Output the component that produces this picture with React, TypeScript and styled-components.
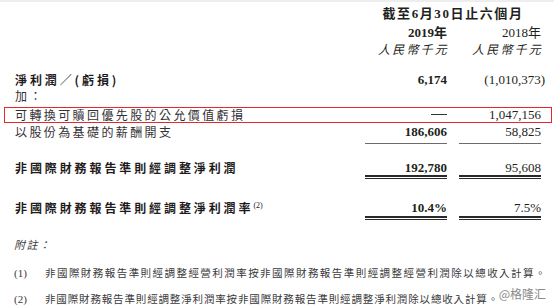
import React from "react";
import styled, { createGlobalStyle, css } from "styled-components";

const GlobalStyle = createGlobalStyle`
  html, body {
    margin: 0;
    padding: 0;
    background: #ffffff;
  }
  body {
    font-family: "Liberation Serif", "Noto Sans CJK TC", serif;
    color: #231f20;
  }
`;

const Page = styled.div`
  position: relative;
  width: 554px;
  height: 308px;
  box-sizing: border-box;
  border-top: 2px solid #eeeeee;
  overflow: hidden;
  display: flex;
  flex-direction: column;
`;

const Grid = styled.div<{ $mt?: number }>`
  display: grid;
  grid-template-columns: 1fr 82px 82px;
  column-gap: 12px;
  padding: 0 13px 0 15px;
  margin-top: ${(p) => p.$mt ?? 0}px;
  align-items: start;
`;

const HeadRow = styled(Grid)<{ $h: number }>`
  height: ${(p) => p.$h}px;
  align-items: center;
`;

const Period = styled.div`
  grid-column: 2 / 4;
  text-align: center;
  font-size: 13px;
  font-weight: 700;
  letter-spacing: 1.6px;
  line-height: 16px;
`;

const Year = styled.div<{ $bold?: boolean }>`
  grid-column: ${(p) => (p.$bold ? 2 : 3)};
  text-align: right;
  font-size: 13px;
  font-weight: ${(p) => (p.$bold ? 700 : 400)};
  line-height: 16px;
`;

const Currency = styled.div<{ $col: number }>`
  grid-column: ${(p) => p.$col};
  text-align: right;
  font-family: "Noto Sans CJK TC", sans-serif;
  font-style: italic;
  font-size: 12px;
  letter-spacing: 2.2px;
  margin-right: -2px;
  line-height: 15px;
`;

const Row = styled(Grid)<{ $lh?: number }>`
  line-height: ${(p) => p.$lh ?? 16}px;
`;

const Boxed = styled(Row)`
  box-sizing: border-box;
  height: 16px;
  margin-left: 4px;
  margin-right: 2px;
  padding: 0 10px 0 10px;
  border: 1px solid #e8262b;
  line-height: 14px;
`;

const Label = styled.div<{ $bold?: boolean }>`
  font-family: "Noto Sans CJK TC", sans-serif;
  font-size: 12px;
  font-weight: ${(p) => (p.$bold ? 700 : 400)};
  letter-spacing: ${(p) => (p.$bold ? 2.9 : 2.4)}px;
  white-space: nowrap;
  color: ${(p) => (p.$bold ? "#1f1b1c" : "#333033")};
`;

const Sup = styled.sup`
  font-family: "Liberation Serif", serif;
  font-weight: 400;
  font-size: 8px;
  letter-spacing: 0;
  vertical-align: 5px;
  line-height: 0;
`;

const Amount = styled.div<{ $bold?: boolean; $rule?: "single" | "double"; $pb?: number; $neg?: boolean }>`
  text-align: right;
  font-size: 13px;
  font-weight: ${(p) => (p.$bold ? 700 : 400)};
  margin-right: ${(p) => (p.$neg ? -4 : 0)}px;
  padding-bottom: ${(p) => p.$pb ?? 0}px;
  ${(p) =>
    p.$rule === "single" &&
    css`
      border-bottom: 1px solid #6b6b6b;
    `}
  ${(p) =>
    p.$rule === "double" &&
    css`
      border-bottom: 2px solid #2a2a2a;
      box-shadow: 0 1px 0 #ffffff, 0 2px 0 #2a2a2a;
    `}
`;

const Dash = styled.span`
  display: inline-block;
  width: 16px;
  height: 1.5px;
  background: #333;
  vertical-align: 4px;
`;

const Note = styled.div<{ $mt: number; $pr?: number }>`
  display: grid;
  grid-template-columns: 31px minmax(0, 1fr);
  padding-left: 14px;
  padding-right: ${(p) => p.$pr ?? 0}px;
  margin-top: ${(p) => p.$mt}px;
  line-height: 16px;
  white-space: nowrap;
  color: #3a3a3a;
`;

const NoteTitle = styled.div<{ $mt: number }>`
  padding-left: 14px;
  margin-top: ${(p) => p.$mt}px;
  line-height: 16px;
  font-family: "Noto Sans CJK TC", sans-serif;
  font-style: italic;
  font-size: 11px;
  letter-spacing: 1.5px;
  color: #3a3a3a;
`;

const NoteMark = styled.span`
  font-size: 11px;
`;

const NoteText = styled.span<{ $ls?: number }>`
  display: block;
  font-family: "Noto Sans CJK TC", sans-serif;
  font-size: 10.5px;
  letter-spacing: ${(p) => p.$ls ?? 1.45}px;
`;

const Watermark = styled.div`
  position: absolute;
  right: 8px;
  bottom: 6px;
  font-family: "Noto Sans CJK SC", sans-serif;
  font-size: 12px;
  line-height: 16px;
  color: #8a8a8a;
`;

export default function App() {
  return (
    <>
      <GlobalStyle />
      <Page>
        <HeadRow $h={23}>
          <Period>截至6月30日止六個月</Period>
        </HeadRow>
        <HeadRow $h={16}>
          <Year $bold>2019年</Year>
          <Year>2018年</Year>
        </HeadRow>
        <HeadRow $h={15}>
          <Currency $col={2}>人民幣千元</Currency>
          <Currency $col={3}>人民幣千元</Currency>
        </HeadRow>

        <Row $mt={16}>
          <Label $bold>淨利潤／(虧損)</Label>
          <Amount $bold>6,174</Amount>
          <Amount $neg>(1,010,373)</Amount>
        </Row>
        <Row>
          <Label>加：</Label>
        </Row>
        <Boxed $mt={3}>
          <Label>可轉換可贖回優先股的公允價值虧損</Label>
          <Amount>
            <Dash />
          </Amount>
          <Amount>1,047,156</Amount>
        </Boxed>
        <Row $mt={1}>
          <Label>以股份為基礎的薪酬開支</Label>
          <Amount $bold $rule="single" $pb={3}>
            186,606
          </Amount>
          <Amount $rule="single" $pb={3}>
            58,825
          </Amount>
        </Row>

        <Row $mt={17} $lh={14}>
          <Label $bold>非國際財務報告準則經調整淨利潤</Label>
          <Amount $bold $rule="double">
            192,780
          </Amount>
          <Amount $rule="double">95,608</Amount>
        </Row>

        <Row $mt={24} $lh={14}>
          <Label $bold>
            非國際財務報告準則經調整淨利潤率<Sup>(2)</Sup>
          </Label>
          <Amount $bold $rule="double" $pb={1}>
            10.4%
          </Amount>
          <Amount $rule="double" $pb={1}>
            7.5%
          </Amount>
        </Row>

        <NoteTitle $mt={18}>附註：</NoteTitle>
        <Note $mt={13}>
          <NoteMark>(1)</NoteMark>
          <NoteText>非國際財務報告準則經調整經營利潤率按非國際財務報告準則經調整經營利潤除以總收入計算。</NoteText>
        </Note>
        <Note $mt={10} $pr={56}>
          <NoteMark>(2)</NoteMark>
          <NoteText $ls={0.85}>非國際財務報告準則經調整淨利潤率按非國際財務報告準則經調整淨利潤除以總收入計算。</NoteText>
        </Note>
        <Watermark>@格隆汇</Watermark>
      </Page>
    </>
  );
}
